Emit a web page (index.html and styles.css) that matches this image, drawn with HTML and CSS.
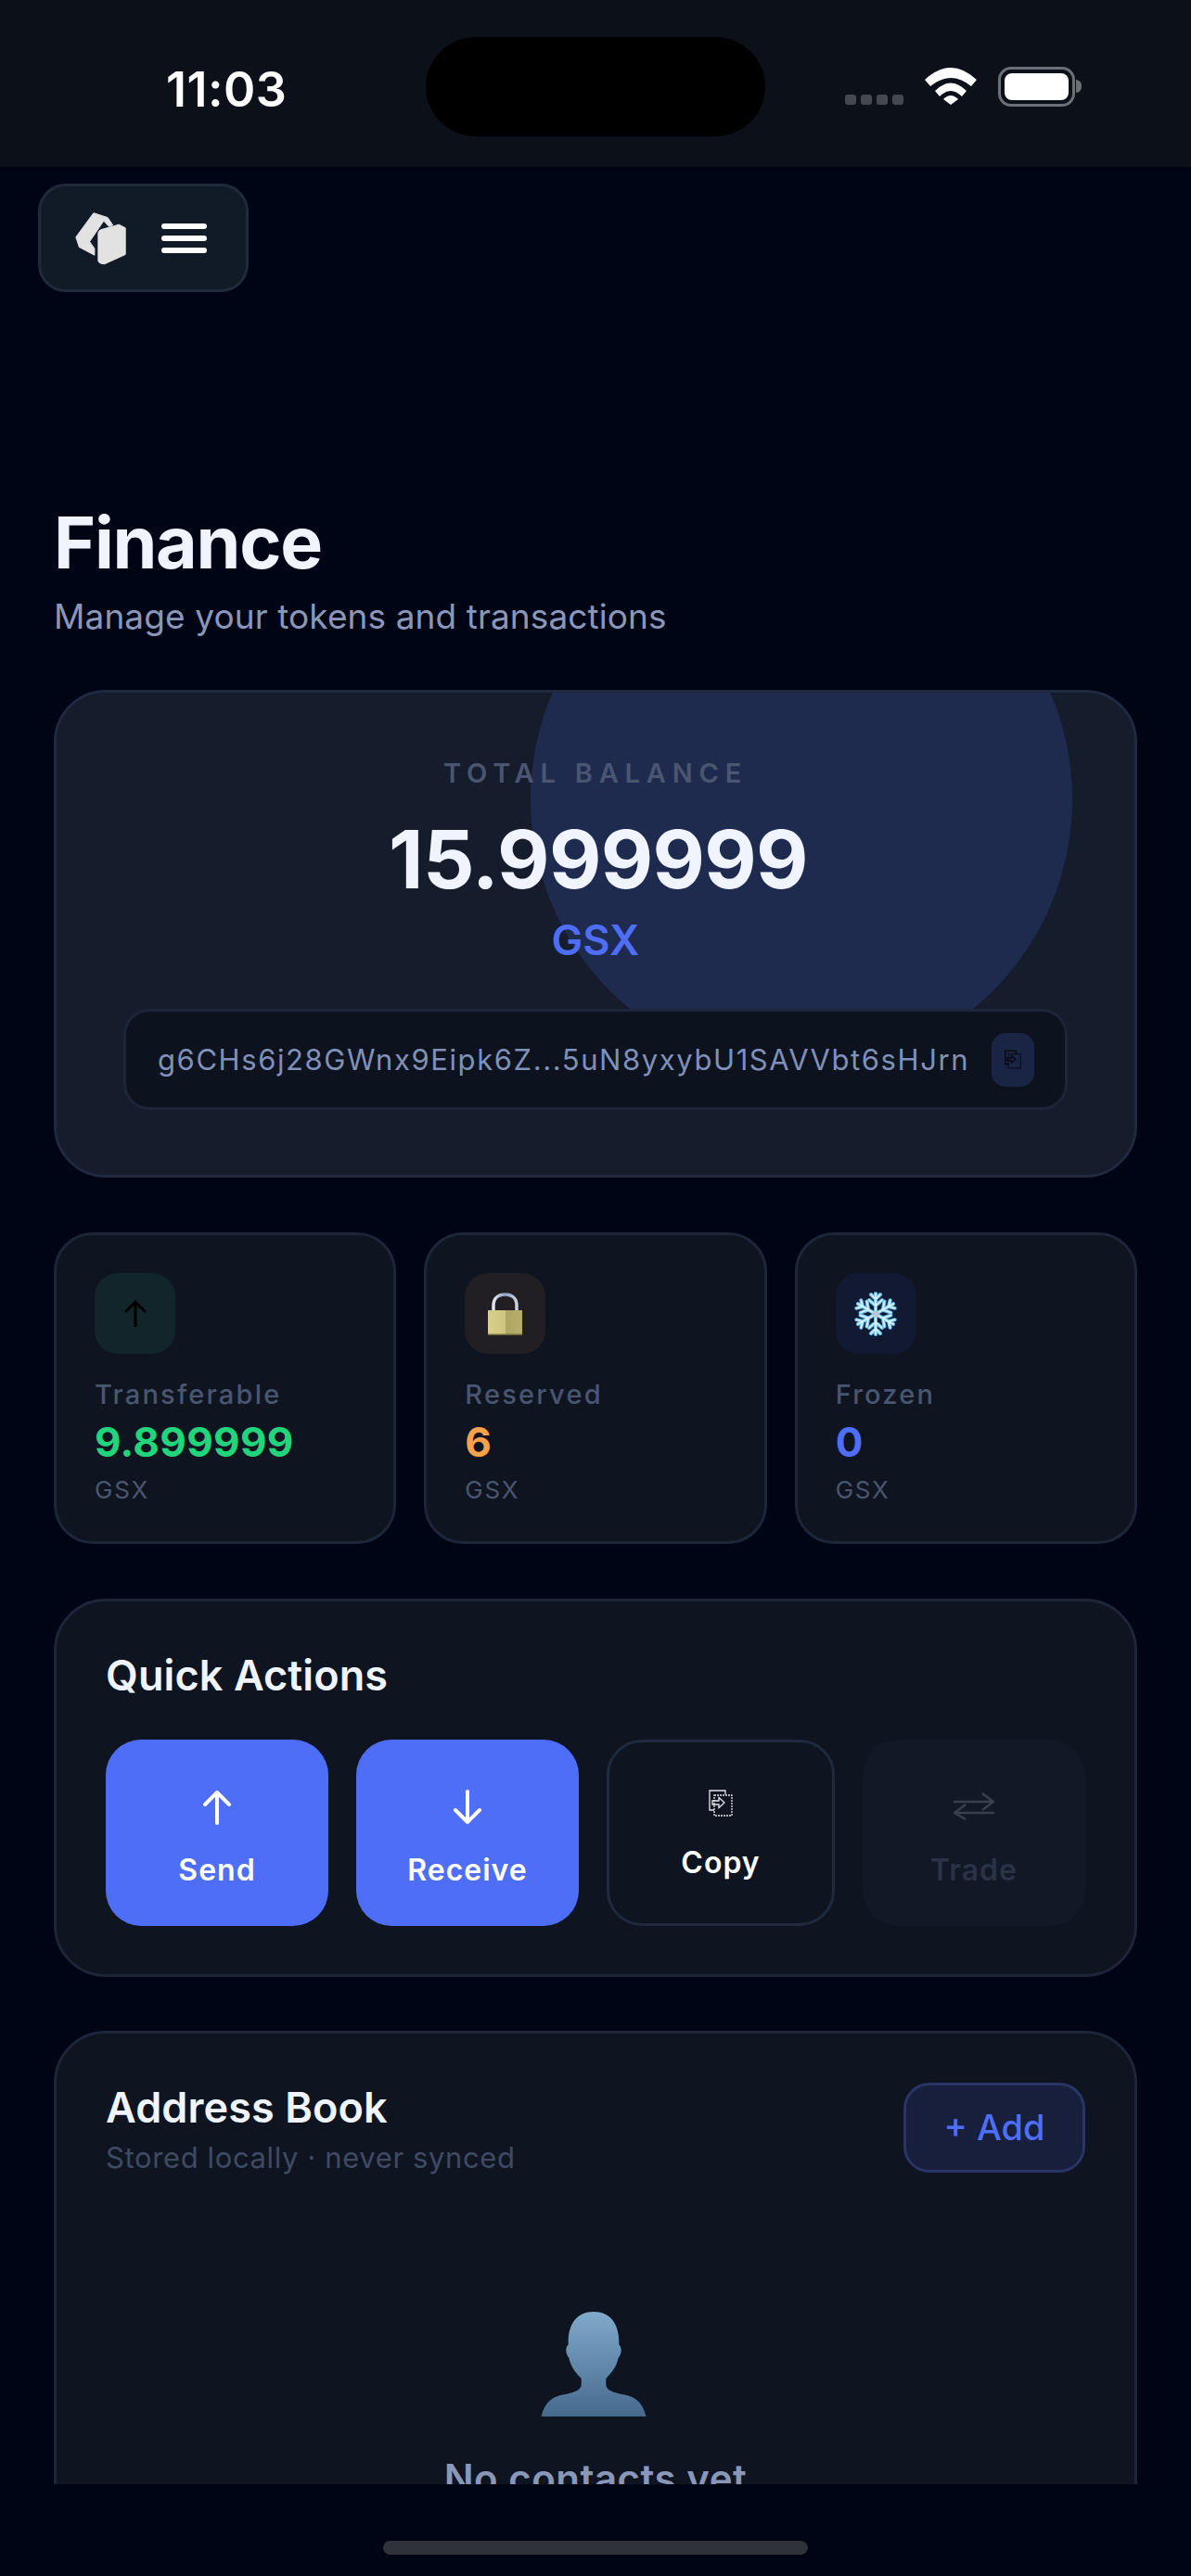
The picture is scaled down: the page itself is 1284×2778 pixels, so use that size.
FILE: index.html
```html
<!DOCTYPE html>
<html lang="en">
<head>
  <meta charset="UTF-8">
  <meta name="viewport" content="width=device-width, initial-scale=1.0">
  <title>Finance</title>
  <link rel="stylesheet" href="styles.css">
</head>
<body>
  <div class="status-bar">
    <div class="status-time">11:03</div>
    <div class="status-island"></div>
    <div class="status-icons">
      <div class="signal-dots"><span></span><span></span><span></span><span></span></div>
      <svg class="wifi-icon" viewBox="0 0 56 40"><path d="M0 13Q28-13 56 13L50 20Q28 2 6 20Z"/><path d="M11 25Q28 8 45 25L40 31Q28 19 16 31Z"/><path d="M20 34Q28 26 36 34L28 40Z"/></svg>
      <div class="battery"><div class="battery-fill"></div></div>
      <div class="battery-nub"></div>
    </div>
  </div>

  <div class="scroll-area">
    <div class="top-row">
      <div class="menu-pill">
        <svg class="logo-icon" viewBox="150 141 170 176"><path d="M154 225L212 146L258 161L275 186L262 190L245 172L199 240L215 262L215 284L165 258Z"/><path d="M227 212Q227 205 235 201L295 184L316 195V282L248 313Q228 312 227 303Z"/></svg>
        <div class="burger"><span></span><span></span><span></span></div>
      </div>
    </div>

    <main class="page">
      <h1 class="page-title">Finance</h1>
      <p class="page-sub">Manage your tokens and transactions</p>

      <section class="balance-card">
        <div class="balance-glow"></div>
        <div class="balance-label">TOTAL BALANCE</div>
        <div class="balance-value">15.999999</div>
        <div class="balance-unit">GSX</div>
        <div class="address-box">
          <span class="address-text">g6CHs6j28GWnx9Eipk6Z...5uN8yxybU1SAVVbt6sHJrn</span>
          <span class="address-copy">
            <svg class="copy-small" viewBox="0 0 26 29"><path d="M18 5V1H1V22H6"/><path d="M6 6H25V28H6Z" stroke-dasharray="2 1"/><path d="M4 12H11V8.500L17 14L11 19.500V16H4Z"/></svg>
          </span>
        </div>
      </section>

      <section class="stats-row">
        <div class="stat-card">
          <div class="stat-icon icon-green">
            <svg class="stat-arrow" viewBox="0 0 24 29"><path d="M12 28V2M2 12L12 2L22 12"/></svg>
          </div>
          <div class="stat-label">Transferable</div>
          <div class="stat-value green">9.899999</div>
          <div class="stat-unit">GSX</div>
        </div>
        <div class="stat-card">
          <div class="stat-icon icon-amber">
            <svg class="lock-icon" viewBox="0 0 37 46">
              <defs>
                <linearGradient id="lockBody" x1="0" x2="1" y1="0" y2="0"><stop offset="0" stop-color="#d9cf8c"/><stop offset="0.5" stop-color="#cfc480"/><stop offset="0.52" stop-color="#ada564"/><stop offset="1" stop-color="#b8ae6c"/></linearGradient>
                <linearGradient id="lockBar" x1="0" x2="1" y1="0" y2="0"><stop offset="0" stop-color="#dfe8f5"/><stop offset="0.5" stop-color="#8d9fc0"/><stop offset="1" stop-color="#c9d2e2"/></linearGradient>
              </defs>
              <path d="M6 20V14C6 6 11 2 18.500 2S31 6 31 14V20" fill="none" stroke="url(#lockBar)" stroke-width="3.500"/>
              <rect x="0" y="19" width="37" height="27" fill="url(#lockBody)"/>
              <rect x="0" y="44.500" width="37" height="1.500" fill="#6f6838"/>
            </svg>
          </div>
          <div class="stat-label">Reserved</div>
          <div class="stat-value amber">6</div>
          <div class="stat-unit">GSX</div>
        </div>
        <div class="stat-card">
          <div class="stat-icon icon-blue">
            <svg class="flake-icon" viewBox="-25 -25 50 50">
              <defs>
                <g id="flakeArm"><path d="M0 0V-22M0-9L-7-15M0-9L7-15M0-16L-5-21M0-16L5-21"/></g>
                <g id="flakeAll">
                  <use href="#flakeArm"/><use href="#flakeArm" transform="rotate(60)"/><use href="#flakeArm" transform="rotate(120)"/>
                  <use href="#flakeArm" transform="rotate(180)"/><use href="#flakeArm" transform="rotate(240)"/><use href="#flakeArm" transform="rotate(300)"/>
                </g>
              </defs>
              <use href="#flakeAll" fill="none" stroke="#6cc2ee" stroke-width="4" stroke-linecap="round"/>
              <use href="#flakeAll" fill="none" stroke="#dcf4ff" stroke-width="1.600" stroke-linecap="round"/>
              <circle r="3.500" fill="#b8c8d4"/>
            </svg>
          </div>
          <div class="stat-label">Frozen</div>
          <div class="stat-value blue">0</div>
          <div class="stat-unit">GSX</div>
        </div>
      </section>

      <section class="panel actions-panel">
        <h2 class="panel-title">Quick Actions</h2>
        <div class="actions-grid">
          <div class="action-btn primary">
            <svg class="action-arrow" viewBox="0 0 32 38"><path d="M16 36V3M3 16L16 3L29 16"/></svg>
            <span class="action-label">Send</span>
          </div>
          <div class="action-btn primary">
            <svg class="action-arrow" viewBox="0 0 32 38"><path d="M16 2V35M3 22L16 35L29 22"/></svg>
            <span class="action-label">Receive</span>
          </div>
          <div class="action-btn outline">
            <svg class="copy-big" viewBox="0 0 26 29"><path d="M18 5V1H1V22H6"/><path d="M6 6H25V28H6Z" stroke-dasharray="2 1"/><path d="M4 12H11V8.500L17 14L11 19.500V16H4Z"/></svg>
            <span class="action-label">Copy</span>
          </div>
          <div class="action-btn disabled">
            <svg class="trade-icon" viewBox="0 0 44 30"><path d="M0 10H43M31 1L43 10L31 19"/><path d="M44 22H1M13 13L1 22L13 29"/></svg>
            <span class="action-label">Trade</span>
          </div>
        </div>
      </section>

      <section class="panel book-panel">
        <div class="book-head">
          <div>
            <h2 class="panel-title">Address Book</h2>
            <p class="book-sub">Stored locally · never synced</p>
          </div>
          <div class="add-btn">+ Add</div>
        </div>
        <div class="empty-state">
          <svg class="person-icon" viewBox="130 98 340 340">
            <defs>
              <linearGradient id="personFill" x1="0" x2="0" y1="0" y2="1"><stop offset="0" stop-color="#80a9ca"/><stop offset="1" stop-color="#466a8d"/></linearGradient>
            </defs>
            <path d="M130 438C140 395 165 372 200 367C235 362 260 352 260 335V315C240 295 225 275 220 248C208 235 208 212 218 205C215 140 245 98 300 98C355 98 385 140 382 205C392 212 392 235 380 248C375 275 360 295 340 315V335C340 352 365 362 400 367C435 372 460 395 470 438Z" fill="url(#personFill)"/>
          </svg>
          <div class="empty-title">No contacts yet</div>
        </div>
      </section>
    </main>
  </div>

  <div class="home-area"><div class="home-bar"></div></div>
</body>
</html>
```

FILE: styles.css
```css
* {
  box-sizing: border-box;
}

html, body {
  margin: 0;
  height: 100%;
}

body {
  font-family: Inter, "Liberation Sans", sans-serif;
  background-color: #000516;
  color: #f0f4ff;
  display: flex;
  flex-direction: column;
  height: 100vh;
  overflow: hidden;
}

h1, h2, p {
  margin: 0;
}

/* status bar */
.status-bar {
  flex: none;
  height: 180px;
  background-color: #0b1019;
  display: grid;
  grid-template-columns: 459px 366px 1fr;
  padding-top: 40px;
}

.status-time {
  padding: 30px 0 0 179px;
  font-size: 52px;
  line-height: 54px;
  font-weight: 600;
  letter-spacing: 0.500px;
  color: #fff;
}

.status-island {
  height: 107px;
  background-color: #000;
  border-radius: 54px;
}

.status-icons {
  display: flex;
  align-items: flex-start;
  padding: 32px 0 0 86px;
}

.signal-dots {
  display: flex;
  gap: 5px;
  margin-top: 30px;
}

.signal-dots span {
  width: 12px;
  height: 11px;
  border-radius: 3px;
  background-color: #45484f;
}

.wifi-icon {
  width: 56px;
  height: 40px;
  margin: 1px 0 0 23px;
  fill: #fff;
}

.battery {
  width: 83px;
  height: 43px;
  margin-left: 23px;
  padding: 4px;
  border: 3px solid #6c6f76;
  border-radius: 14px;
}

.battery-fill {
  height: 100%;
  background-color: #fff;
  border-radius: 8px;
}

.battery-nub {
  width: 6px;
  height: 14px;
  margin: 14px 0 0 1px;
  background-color: #6c6f76;
  border-radius: 0 7px 7px 0;
}

/* scrolling content */
.scroll-area {
  flex: 1;
  min-height: 0;
  overflow: hidden;
}

.top-row {
  padding: 18px 0 0 41px;
}

.menu-pill {
  width: 227px;
  height: 117px;
  display: flex;
  align-items: center;
  padding-left: 36px;
  background-color: #111a27;
  border: 3px solid #1f2a3a;
  border-radius: 30px;
}

.logo-icon {
  width: 57px;
  height: 58px;
  fill: #e2e2e2;
  stroke: #e2e2e2;
  stroke-width: 3;
  stroke-linejoin: round;
}

.burger {
  margin-left: 37px;
  display: flex;
  flex-direction: column;
  gap: 7px;
}

.burger span {
  display: block;
  width: 49px;
  height: 6px;
  background-color: #fff;
  border-radius: 3px;
}

.page {
  padding: 0 58px 80px;
}

.page-title {
  margin-top: 228px;
  font-size: 77px;
  line-height: 84px;
  font-weight: 700;
  letter-spacing: -1.300px;
}

.page-sub {
  margin-top: 14px;
  font-size: 37px;
  line-height: 48px;
  letter-spacing: 0.100px;
  color: #8b97b8;
}

/* balance */
.balance-card {
  position: relative;
  overflow: hidden;
  height: 526px;
  margin-top: 55px;
  padding-top: 69px;
  text-align: center;
  background-color: #151c2c;
  border: 3px solid #1f2a3e;
  border-radius: 56px;
}

.balance-glow {
  position: absolute;
  top: -177px;
  right: 67px;
  width: 584px;
  height: 584px;
  border-radius: 50%;
  background-color: #1e2a4e;
}

.balance-label, .balance-value, .balance-unit, .address-box {
  position: relative;
}

.balance-label {
  font-size: 29px;
  line-height: 36px;
  font-weight: 600;
  letter-spacing: 6.800px;
  color: #4a5570;
}

.balance-value {
  margin-top: 23px;
  padding-left: 6px;
  font-size: 87px;
  line-height: 104px;
  font-weight: 700;
  letter-spacing: -0.700px;
}

.balance-unit {
  margin-top: 8px;
  font-size: 45px;
  line-height: 54px;
  font-weight: 600;
  color: #4f6ef7;
}

.address-box {
  display: flex;
  align-items: center;
  justify-content: space-between;
  height: 109px;
  margin: 47px 72px 0;
  padding: 0 33px 0 34px;
  background-color: #0d131e;
  border: 3px solid #1c2638;
  border-radius: 28px;
}

.address-text {
  font-size: 31px;
  letter-spacing: 1.580px;
  color: #8090b8;
  white-space: nowrap;
}

.address-copy {
  flex: none;
  width: 46px;
  height: 58px;
  display: flex;
  align-items: center;
  justify-content: center;
  background-color: #1a2444;
  border-radius: 15px;
}

.copy-small {
  width: 18px;
  height: 21px;
  fill: none;
  stroke: #05070d;
  stroke-width: 1.800;
}

/* stat cards */
.stats-row {
  display: grid;
  grid-template-columns: repeat(3, 1fr);
  gap: 30px;
  margin-top: 59px;
}

.stat-card {
  height: 336px;
  padding: 41px 0 0 41px;
  background-color: #0e1520;
  border: 3px solid #1c2638;
  border-radius: 42px;
}

.stat-icon {
  width: 87px;
  height: 87px;
  display: flex;
  align-items: center;
  justify-content: center;
  border-radius: 25px;
}

.icon-green { background-color: #12252a; }
.icon-amber { background-color: #211f24; }
.icon-blue { background-color: #121a33; }

.stat-arrow {
  width: 24px;
  height: 29px;
  fill: none;
  stroke: #000;
  stroke-width: 3;
  stroke-linecap: round;
  stroke-linejoin: round;
}

.lock-icon {
  width: 37px;
  height: 46px;
}

.flake-icon {
  width: 50px;
  height: 50px;
}

.stat-label {
  margin-top: 26px;
  font-size: 29px;
  line-height: 36px;
  letter-spacing: 2.200px;
  font-weight: 500;
  color: #4a5570;
}

.stat-value {
  margin-top: 6px;
  font-size: 44px;
  line-height: 54px;
  font-weight: 700;
  letter-spacing: 0.300px;
}

.green { color: #22d47c; }
.amber { color: #f9a04b; }
.blue { color: #4f6ef7; }

.stat-unit {
  margin-top: 9px;
  font-size: 26px;
  line-height: 32px;
  letter-spacing: 1.800px;
  color: #4a5570;
}

/* panels */
.panel {
  margin-top: 59px;
  padding: 0 53px;
  background-color: #0e1520;
  border: 3px solid #1c2638;
  border-radius: 56px;
}

.panel-title {
  font-size: 45px;
  line-height: 56px;
  font-weight: 600;
  letter-spacing: 0.100px;
}

.actions-panel {
  height: 408px;
  padding-top: 52px;
}

.actions-grid {
  display: grid;
  grid-template-columns: 240fr 240fr 246fr 240fr;
  gap: 30px;
  margin-top: 41px;
}

.action-btn {
  height: 201px;
  display: flex;
  flex-direction: column;
  align-items: center;
  padding-top: 54px;
  border-radius: 38px;
}

.primary {
  background-color: #4f6ef7;
  color: #fff;
}

.outline {
  padding-top: 51px;
  border: 3px solid #1f2a3e;
  color: #fff;
}

.disabled {
  background-color: #111826;
  color: #2a3245;
}

.action-arrow {
  width: 32px;
  height: 38px;
  fill: none;
  stroke: #fff;
  stroke-width: 4;
  stroke-linecap: round;
  stroke-linejoin: round;
}

.copy-big {
  width: 26px;
  height: 29px;
  margin-bottom: 1px;
  fill: none;
  stroke: #e4e6ea;
  stroke-width: 1.300;
}

.trade-icon {
  width: 44px;
  height: 30px;
  margin: 3px 0 5px;
  fill: none;
  stroke: #3a3f4c;
  stroke-width: 2.500;
}

.action-label {
  margin-top: 29px;
  font-size: 32px;
  line-height: 40px;
  font-weight: 600;
  letter-spacing: 1px;
}

.book-panel {
  margin-top: 58px;
  padding-top: 52px;
  height: 620px;
}

.book-head {
  display: flex;
  justify-content: space-between;
  align-items: flex-start;
}

.book-sub {
  margin-top: 6px;
  font-size: 31px;
  line-height: 40px;
  letter-spacing: 0.620px;
  color: #3f4a63;
}

.add-btn {
  width: 196px;
  height: 97px;
  margin-top: 1px;
  line-height: 91px;
  text-align: center;
  font-size: 38px;
  font-weight: 500;
  color: #4f6ef7;
  background-color: #171f3d;
  border: 3px solid #283566;
  border-radius: 28px;
}

.empty-state {
  display: flex;
  flex-direction: column;
  align-items: center;
  margin-top: 146px;
}

.person-icon {
  width: 114px;
  height: 113px;
  margin-right: 4px;
}

.empty-title {
  margin-top: 42px;
  font-size: 42px;
  line-height: 50px;
  font-weight: 600;
  letter-spacing: 0.500px;
  color: #8b97b8;
}

/* bottom */
.home-area {
  flex: none;
  height: 99px;
  padding-top: 61px;
  background-color: #000516;
}

.home-bar {
  width: 458px;
  height: 15px;
  margin: 0 auto;
  background-color: #2f3238;
  border-radius: 8px;
}
```
